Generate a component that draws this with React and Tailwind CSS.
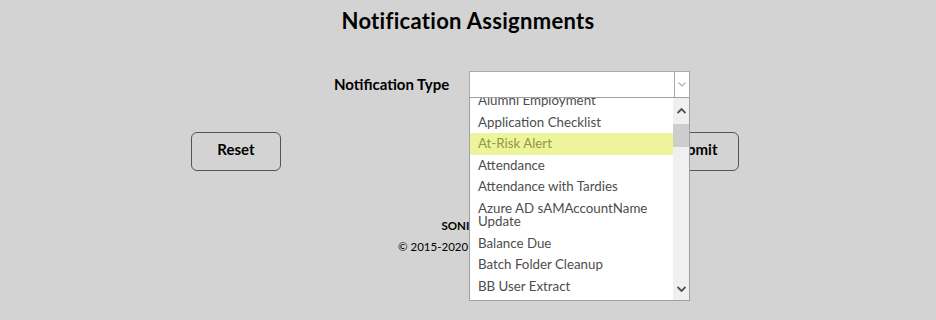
import React from "react";

const items = [
  { t: "Alumni Employment" },
  { t: "Application Checklist" },
  { t: "At-Risk Alert", hl: true },
  { t: "Attendance" },
  { t: "Attendance with Tardies" },
  { t: "Azure AD sAMAccountName Update" },
  { t: "Balance Due" },
  { t: "Batch Folder Cleanup" },
  { t: "BB User Extract" },
  { t: "Billing Notice" },
];

export default function App() {
  return (
    <div
      className="w-[936px] h-[320px] bg-[#d3d3d3] overflow-hidden text-black"
      style={{ fontFamily: "Lato, 'Noto Sans', sans-serif" }}
    >
      <h1 className="text-center text-[22px] font-bold leading-[24px] pt-[9px] tracking-[0.3px]">
        Notification Assignments
      </h1>

      <div className="flex items-center mt-[38px] ml-[334px]">
        <div className="w-[116px] text-[15px] font-bold whitespace-nowrap">Notification Type</div>
        <div className="relative ml-[19px]">
          <div className="w-[221px] h-[27px] bg-white border border-[#a9a9a9] flex">
            <div className="flex-1" />
            <div className="w-[15px] border-l border-[#a9a9a9] flex items-center justify-center">
              <svg width="8" height="5" viewBox="0 0 8 5">
                <path d="M0.5 0.5 L4 4 L7.5 0.5" fill="none" stroke="#b0b0b0" strokeWidth="1.2" />
              </svg>
            </div>
          </div>
          <div className="absolute left-0 top-[26px] w-[221px] h-[204px] bg-white border border-[#a0a0a0] flex z-10">
            <div className="flex-1 overflow-hidden">
              <div className="-mt-[8px]">
                {items.map((it) => (
                  <div
                    key={it.t}
                    className={
                      "pl-[8px] pr-2 py-[4px] text-[13.3px] leading-[13.5px] " +
                      (it.hl ? "bg-[#eef49c] text-[#8c9a3e]" : "text-[#4d4d4d]")
                    }
                  >
                    {it.t}
                  </div>
                ))}
              </div>
            </div>
            <div className="w-[16px] bg-[#f0f0f0] flex flex-col">
              <div className="h-[17px] flex items-end justify-center pb-[1px]">
                <svg width="9" height="6" viewBox="0 0 9 6">
                  <path d="M0.5 5 L4.5 1 L8.5 5" fill="none" stroke="#505050" strokeWidth="1.8" />
                </svg>
              </div>
              <div className="h-[9px]" />
              <div className="h-[23px] bg-[#cdcdcd]" />
              <div className="flex-1" />
              <div className="h-[17px] flex items-start justify-center pt-[3px]">
                <svg width="9" height="6" viewBox="0 0 9 6">
                  <path d="M0.5 1 L4.5 5 L8.5 1" fill="none" stroke="#505050" strokeWidth="1.8" />
                </svg>
              </div>
            </div>
          </div>
        </div>
      </div>

      <div className="flex mt-[34px]">
        <button className="ml-[191px] w-[90px] h-[39px] border border-[#555] rounded-[6px] text-[15px] font-bold pb-[4px]">
          Reset
        </button>
        <button className="ml-[368px] w-[90px] h-[39px] border border-[#555] rounded-[6px] text-[15px] font-bold pb-[4px]">
          Submit
        </button>
      </div>

      <div className="text-center text-[11.5px] font-bold mt-[48px] leading-[14px]">SONIS 2.5</div>
      <div className="text-center text-[11.5px] mt-[7px] leading-[14px]">
        © 2015-2020 Jenzabar, Inc.
      </div>
    </div>
  );
}
